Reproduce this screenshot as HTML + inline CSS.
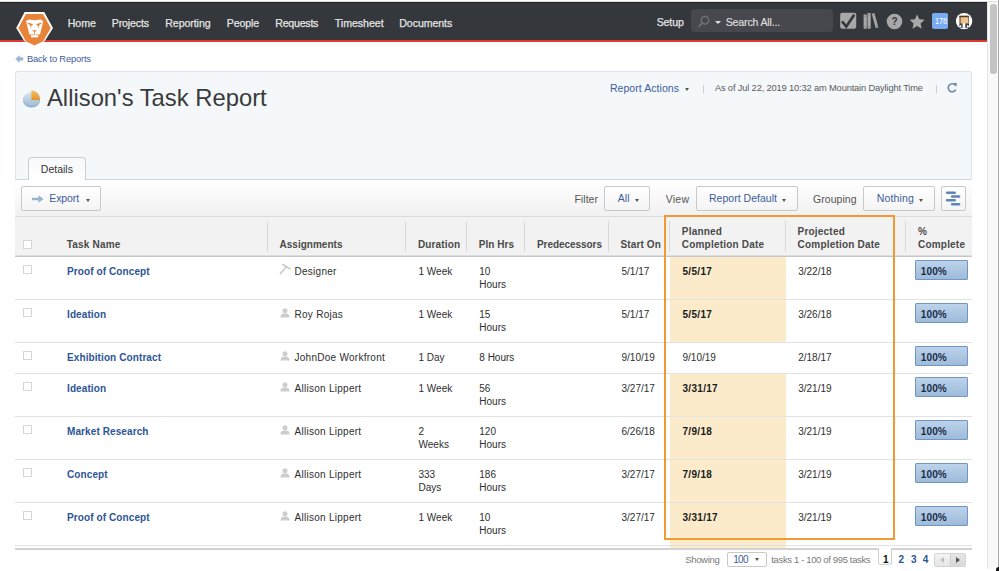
<!DOCTYPE html>
<html><head><meta charset="utf-8">
<style>
*{box-sizing:border-box;margin:0;padding:0}
html,body{width:999px;height:571px;overflow:hidden;background:#fff;font-family:"Liberation Sans",sans-serif;position:relative}
.a{position:absolute}
.t{position:absolute;line-height:1;white-space:nowrap;z-index:2}
.caret{position:absolute;width:0;height:0;border-left:2.8px solid transparent;border-right:2.8px solid transparent;border-top:3px solid #555;margin-left:0.2px;margin-top:0px}
.btn{position:absolute;border:1px solid #c9c9c9;border-radius:2px;background:linear-gradient(#ffffff,#f4f4f4)}
.hsep{position:absolute;top:221px;height:31px;width:1px;background:#d9d9d9}
.rowb{position:absolute;left:15px;width:957px;height:1px;background:#e2e2e2}
.cb{position:absolute;left:23px;width:9px;height:9px;border:1px solid #d6d6d6;background:#fff}
.pct{position:absolute;left:915px;width:53px;height:20px;margin-top:0.2px;border:1px solid #7396bf;border-radius:1px;background:linear-gradient(#bcd3ea,#9ebbdb)}
.hl{position:absolute;left:670px;width:116px;background:#fbebcb}
</style></head><body>
<!-- top strip -->
<div class="a" style="left:0;top:1px;width:997px;height:1px;background:#dedede"></div>
<!-- header -->
<div class="a" style="left:0;top:2px;width:987px;height:38px;background:#34373c;border-top:1px solid #23252a"></div>
<div class="a" style="left:0;top:40px;width:987px;height:2px;background:#e0382b"></div>
<!-- scrollbar -->
<div class="a" style="left:987px;top:2px;width:11px;height:567px;background:#f9f9f9;border-left:1px solid #e6e6e6"></div>
<div class="a" style="left:998px;top:0;width:1px;height:571px;background:#a8a8a8"></div>
<div class="a" style="left:996px;top:567px;width:3px;height:4px;background:#111;border-radius:3px 0 0 0"></div>
<div class="a" style="left:990.2px;top:4px;width:6.4px;height:70px;background:#c3c3c3;border-radius:3.2px"></div>

<!-- logo -->
<svg class="a" style="left:0;top:0;z-index:3" width="60" height="50" viewBox="0 0 60 50">
  <polygon points="24.6,12 44.2,12 53,28 44.8,41 34.5,46.6 24.2,41 16.2,28" fill="#fff"/>
  <polygon points="25.9,14 43,14 50.8,28 43.2,41.2 34.5,45.5 25.8,41.2 18.4,28" fill="#e8843a"/>
  <path d="M26,21 L28.7,19.6 L34.6,20.2 L40.5,19.6 L43.3,21.2 L40,34.5 L29.4,34.5 Z" fill="#fff"/>
  <path d="M31,35.1 L38.2,35.1 L38.2,37.4 L31,37.4 Z" fill="#fff"/>
  <path d="M26.2,22.2 L32.8,23.9 L32.6,25.2 L31.4,25.6 L30.9,28.6 L30.1,25.3 Z" fill="#e8843a"/>
  <path d="M43.0,22.2 L36.4,23.9 L36.6,25.2 L37.8,25.6 L38.3,28.6 L39.1,25.3 Z" fill="#e8843a"/>
  <path d="M32.1,30.3 L36.9,30.3 L34.5,32.2 Z" fill="#e8843a"/>
  <path d="M34.5,32 L34.5,33.8" stroke="#e8843a" stroke-width="0.9"/>
</svg>

<!-- search box -->
<div class="a" style="left:691px;top:9px;width:142px;height:23px;background:#46484d;border-radius:4px"></div>
<svg class="a" style="left:697px;top:15px" width="14" height="13" viewBox="0 0 14 13">
  <circle cx="8" cy="5.2" r="3.8" fill="none" stroke="#6e7075" stroke-width="1.5"/>
  <line x1="5.3" y1="8" x2="2" y2="11.5" stroke="#6e7075" stroke-width="1.8" stroke-linecap="round"/>
</svg>
<div class="caret" style="left:714.5px;top:20.5px;border-left-width:3.2px;border-right-width:3.2px;border-top:3.5px solid #e0e0e0"></div>

<!-- header icons -->
<svg class="a" style="left:840px;top:12px" width="17" height="17" viewBox="0 0 17 17">
  <rect x="0.2" y="0.8" width="16" height="16" rx="2" fill="#a8a8a8"/>
  <path d="M2,9.3 L6.3,14.5 L14.2,2.8" fill="none" stroke="#34373c" stroke-width="2.6" stroke-linejoin="miter"/>
</svg>
<svg class="a" style="left:862px;top:12px" width="18" height="18" viewBox="0 0 18 18">
  <rect x="1.6" y="2.6" width="3.2" height="14.1" rx="0.7" fill="#a8a8a8"/>
  <rect x="5.5" y="0.9" width="3.2" height="15.8" rx="0.7" fill="#a8a8a8"/>
  <path d="M9.7,1.7 L12.4,1.1 L16.4,15.4 L13.7,16.1 Z" fill="#a8a8a8"/>
  <g stroke="#6f7175" stroke-width="0.5">
    <line x1="1.6" y1="4.3" x2="4.8" y2="4.3"/><line x1="1.6" y1="14.8" x2="4.8" y2="14.8"/>
    <line x1="5.5" y1="2.8" x2="8.7" y2="2.8"/><line x1="5.5" y1="14.8" x2="8.7" y2="14.8"/>
    <line x1="10.2" y1="3.3" x2="12.9" y2="2.7"/><line x1="13.3" y1="14.3" x2="16" y2="13.6"/>
  </g>
</svg>
<svg class="a" style="left:886px;top:13px" width="17" height="17" viewBox="0 0 17 17">
  <circle cx="8.5" cy="8.5" r="7.8" fill="#a8a8a8"/>
  <text x="8.5" y="12.2" text-anchor="middle" font-family="Liberation Sans" font-weight="700" font-size="10" fill="#34373c">?</text>
</svg>
<svg class="a" style="left:909px;top:13px" width="17" height="17" viewBox="0 0 17 17">
  <polygon points="8.10,1.40 10.27,6.31 15.61,6.86 11.62,10.44 12.74,15.69 8.10,13.00 3.46,15.69 4.58,10.44 0.59,6.86 5.93,6.31" fill="#a8a8a8"/>
</svg>
<div class="a" style="left:932.4px;top:12.9px;width:16px;height:15.7px;background:#78acf2;border-radius:2px"></div>
<svg class="a" style="left:955px;top:12px" width="18" height="18" viewBox="0 0 18 18">
  <circle cx="9.1" cy="9.1" r="8.2" fill="#fff"/>
  <rect x="4.4" y="3.8" width="9.4" height="8.2" fill="#7a5534"/>
  <rect x="4.4" y="3.8" width="9.4" height="1.6" fill="#553a22"/>
  <rect x="5.7" y="5.3" width="7.3" height="6" fill="#eec58f"/>
  <rect x="4.4" y="11.9" width="9.6" height="3.9" fill="#3b3d42"/>
  <rect x="7.6" y="11.1" width="2.7" height="4.7" fill="#fff"/>
  <polygon points="3.8,14.6 6.2,12.8 6.2,15.8" fill="#fff"/>
  <polygon points="14.4,14.6 12,12.8 12,15.8" fill="#fff"/>
</svg>

<!-- back arrow -->
<svg class="a" style="left:15px;top:54.5px" width="9" height="9" viewBox="0 0 9 9">
  <polygon points="0.6,3.9 4.4,0.7 4.4,2.6 7.9,2.6 7.9,5.2 4.4,5.2 4.4,7.4" fill="#9ab6d1" stroke="#9ab6d1" stroke-width="0.5" stroke-linejoin="round"/>
</svg>

<!-- panel -->
<div class="a" style="left:15px;top:71px;width:957px;height:109px;background:#f4f8fb;border:1px solid #dce5ed;border-bottom:1px solid #cfd6dc;border-radius:3px 3px 0 0"></div>
<!-- pie icon -->
<svg class="a" style="left:22px;top:89px" width="20" height="20" viewBox="0 0 20 20">
  <defs>
    <linearGradient id="pg" x1="0" y1="0" x2="0" y2="1"><stop offset="0" stop-color="#d6e5f1"/><stop offset="1" stop-color="#9dbbd4"/></linearGradient>
    <linearGradient id="og" x1="0" y1="0" x2="0" y2="1"><stop offset="0" stop-color="#f6c165"/><stop offset="1" stop-color="#e6952a"/></linearGradient>
  </defs>
  <ellipse cx="9.5" cy="11.8" rx="8.5" ry="6.8" fill="#86a6c2"/>
  <ellipse cx="9.5" cy="10.4" rx="8.5" ry="7.1" fill="url(#pg)"/>
  <path d="M9.4,10.6 L9.4,1.2 A8.6,9.2 0 0 1 18,10.6 Z" fill="url(#og)"/>
  <path d="M9.4,10.6 L18,10.6" stroke="#d98a22" stroke-width="0.8"/>
</svg>
<!-- report actions caret and separators -->
<div class="caret" style="left:685px;top:88px;border-top-color:#555"></div>
<div class="a" style="left:702.5px;top:84.5px;width:1px;height:8px;background:#cfcfcf"></div>
<div class="a" style="left:935.8px;top:84.5px;width:1px;height:8px;background:#cfcfcf"></div>
<svg class="a" style="left:946px;top:82px" width="12" height="12" viewBox="0 0 12 12">
  <path d="M9.3,3.2 A4,4 0 1 0 9.8,7.6" fill="none" stroke="#6a87a8" stroke-width="1.6"/>
  <polygon points="7,1.6 10.8,0.8 10.4,4.8" fill="#6a87a8"/>
</svg>

<!-- tab -->
<div class="a" style="left:27.7px;top:157.4px;width:58px;height:23px;border:1px solid #c9ced3;border-bottom:none;border-radius:4px 4px 0 0;background:linear-gradient(#f7f9fb,#ffffff);z-index:1"></div>

<!-- toolbar -->
<div class="a" style="left:15px;top:180px;width:957px;height:36px;background:linear-gradient(#ffffff,#f1f1f1)"></div>
<div class="btn" style="left:21px;top:186px;width:80px;height:25px"></div>
<svg class="a" style="left:31px;top:195px" width="13" height="8" viewBox="0 0 13 8">
  <polygon points="12.5,4 7.5,0.3 7.5,2.8 1,2.8 1,5.2 7.5,5.2 7.5,7.7" fill="#9ab3cc"/>
</svg>
<div class="caret" style="left:85.5px;top:198.5px"></div>
<div class="btn" style="left:604px;top:186px;width:46px;height:25px"></div>
<div class="caret" style="left:634.5px;top:198.5px"></div>
<div class="btn" style="left:696px;top:186px;width:102px;height:25px"></div>
<div class="caret" style="left:781.8px;top:198.5px"></div>
<div class="btn" style="left:863px;top:186px;width:72px;height:25px"></div>
<div class="caret" style="left:919px;top:198.5px"></div>
<div class="btn" style="left:941px;top:186px;width:25px;height:25px"></div>
<svg class="a" style="left:944px;top:189px" width="19" height="19" viewBox="0 0 19 19">
  <g fill="#5f84b8">
    <rect x="1.9" y="2.4" width="10" height="2.5" rx="1.2"/>
    <rect x="6.9" y="6.2" width="9.4" height="2.5" rx="1.2"/>
    <rect x="1.9" y="10" width="10" height="2.5" rx="1.2"/>
    <rect x="6.9" y="13.9" width="9.4" height="2.5" rx="1.2"/>
  </g>
</svg>

<!-- table header -->
<div class="a" style="left:15px;top:215.5px;width:957px;height:41.5px;background:#f2f2f2;border-top:1px solid #dcdcdc"></div>
<div class="a" style="left:15px;top:255px;width:957px;height:1px;background:#dedede"></div>
<div class="a" style="left:15px;top:256px;width:957px;height:1px;background:#c6c6c6"></div>
<div class="cb" style="top:240px"></div>
<div class="hsep" style="left:267px"></div>
<div class="hsep" style="left:405px"></div>
<div class="hsep" style="left:466px"></div>
<div class="hsep" style="left:524px"></div>
<div class="hsep" style="left:608px"></div>
<div class="hsep" style="left:669px"></div>
<div class="hsep" style="left:785px"></div>
<div class="hsep" style="left:905px"></div>

<!-- highlight column -->
<div class="hl" style="top:257px;height:85px"></div>
<div class="hl" style="top:373px;height:176px"></div>

<!-- row borders -->
<div class="rowb" style="top:298.5px"></div>
<div class="rowb" style="top:341.5px"></div>
<div class="rowb" style="top:372.5px"></div>
<div class="rowb" style="top:415.5px"></div>
<div class="rowb" style="top:458.5px"></div>
<div class="rowb" style="top:501.5px"></div>
<div class="rowb" style="top:544.5px"></div>
<div class="a" style="left:15px;top:548.3px;width:957px;height:1.4px;background:#d2d2d2"></div>

<!-- checkboxes & icons & pct bars -->
<div class="cb" style="top:265.2px"></div>
<div class="cb" style="top:308.2px"></div>
<div class="cb" style="top:351.2px"></div>
<div class="cb" style="top:382.2px"></div>
<div class="cb" style="top:425.2px"></div>
<div class="cb" style="top:468.2px"></div>
<div class="cb" style="top:511.2px"></div>

<svg class="a" style="left:279px;top:263px" width="13" height="13" viewBox="0 0 13 13">
  <line x1="1.4" y1="10.6" x2="7.4" y2="3.8" stroke="#cbcbcb" stroke-width="1.6" stroke-linecap="round"/>
  <line x1="3.8" y1="1.6" x2="10.8" y2="5.8" stroke="#cbcbcb" stroke-width="1.7" stroke-linecap="round"/>
</svg>
<svg class="a" style="left:280px;top:308px" width="10" height="10" viewBox="0 0 10 10"><circle cx="5" cy="2.7" r="2.5" fill="#cdcdcd"/><path d="M0.3,9.6 Q0.6,6.2 3.5,5.6 L6.5,5.6 Q9.4,6.2 9.7,9.6 Z" fill="#cdcdcd"/></svg>
<svg class="a" style="left:280px;top:351px" width="10" height="10" viewBox="0 0 10 10"><circle cx="5" cy="2.7" r="2.5" fill="#cdcdcd"/><path d="M0.3,9.6 Q0.6,6.2 3.5,5.6 L6.5,5.6 Q9.4,6.2 9.7,9.6 Z" fill="#cdcdcd"/></svg>
<svg class="a" style="left:280px;top:382px" width="10" height="10" viewBox="0 0 10 10"><circle cx="5" cy="2.7" r="2.5" fill="#cdcdcd"/><path d="M0.3,9.6 Q0.6,6.2 3.5,5.6 L6.5,5.6 Q9.4,6.2 9.7,9.6 Z" fill="#cdcdcd"/></svg>
<svg class="a" style="left:280px;top:425px" width="10" height="10" viewBox="0 0 10 10"><circle cx="5" cy="2.7" r="2.5" fill="#cdcdcd"/><path d="M0.3,9.6 Q0.6,6.2 3.5,5.6 L6.5,5.6 Q9.4,6.2 9.7,9.6 Z" fill="#cdcdcd"/></svg>
<svg class="a" style="left:280px;top:468px" width="10" height="10" viewBox="0 0 10 10"><circle cx="5" cy="2.7" r="2.5" fill="#cdcdcd"/><path d="M0.3,9.6 Q0.6,6.2 3.5,5.6 L6.5,5.6 Q9.4,6.2 9.7,9.6 Z" fill="#cdcdcd"/></svg>
<svg class="a" style="left:280px;top:511px" width="10" height="10" viewBox="0 0 10 10"><circle cx="5" cy="2.7" r="2.5" fill="#cdcdcd"/><path d="M0.3,9.6 Q0.6,6.2 3.5,5.6 L6.5,5.6 Q9.4,6.2 9.7,9.6 Z" fill="#cdcdcd"/></svg>


<div class="pct" style="top:260.3px"></div>
<div class="pct" style="top:303.3px"></div>
<div class="pct" style="top:346.3px"></div>
<div class="pct" style="top:377.3px"></div>
<div class="pct" style="top:420.3px"></div>
<div class="pct" style="top:463.3px"></div>
<div class="pct" style="top:506.3px"></div>

<!-- orange box -->
<div class="a" style="left:664px;top:214.8px;width:230.5px;height:325.3px;border:2px solid #f19a35;z-index:4"></div>

<!-- footer -->
<div class="btn" style="left:727px;top:552px;width:40px;height:15px;background:#fff"></div>
<div class="caret" style="left:754.5px;top:558px"></div>
<div class="a" style="left:878.2px;top:548.3px;width:14.3px;height:16.7px;border:1px solid #d0d0d0;border-top:none;border-radius:0 0 3px 3px;background:#fff;z-index:1"></div>
<div class="a" style="left:934.3px;top:553px;width:31.5px;height:13.7px;border:1px solid #d4d4d4;border-radius:2px;background:linear-gradient(#f4f4f4,#e6e6e6)"></div>
<div class="a" style="left:949.6px;top:553px;width:1px;height:13.7px;background:#d0d0d0"></div>
<div class="a" style="left:950.6px;top:554px;width:14.2px;height:11.7px;background:linear-gradient(#e6e6e6,#d8d8d8)"></div>
<div class="a" style="left:939.5px;top:556.5px;width:0;height:0;border-top:3.5px solid transparent;border-bottom:3.5px solid transparent;border-right:4px solid #c0c0c0"></div>
<div class="a" style="left:955.5px;top:556.5px;width:0;height:0;border-top:3.5px solid transparent;border-bottom:3.5px solid transparent;border-left:4px solid #555"></div>

<div class="t" id="t0" style="left:67.80px;top:17.53px;font-size:10.6px;color:#e4e4e4;font-weight:400;letter-spacing:-0.090px;-webkit-text-stroke:0.25px #e4e4e4;">Home</div>
<div class="t" id="t1" style="left:111.80px;top:17.53px;font-size:10.6px;color:#e4e4e4;font-weight:400;letter-spacing:-0.154px;-webkit-text-stroke:0.25px #e4e4e4;">Projects</div>
<div class="t" id="t2" style="left:165.30px;top:17.53px;font-size:10.6px;color:#e4e4e4;font-weight:400;letter-spacing:-0.080px;-webkit-text-stroke:0.25px #e4e4e4;">Reporting</div>
<div class="t" id="t3" style="left:226.80px;top:17.53px;font-size:10.6px;color:#e4e4e4;font-weight:400;letter-spacing:-0.138px;-webkit-text-stroke:0.25px #e4e4e4;">People</div>
<div class="t" id="t4" style="left:275.30px;top:17.53px;font-size:10.6px;color:#e4e4e4;font-weight:400;letter-spacing:-0.238px;-webkit-text-stroke:0.25px #e4e4e4;">Requests</div>
<div class="t" id="t5" style="left:334.80px;top:17.53px;font-size:10.6px;color:#e4e4e4;font-weight:400;letter-spacing:-0.033px;-webkit-text-stroke:0.25px #e4e4e4;">Timesheet</div>
<div class="t" id="t6" style="left:399.30px;top:17.53px;font-size:10.6px;color:#e4e4e4;font-weight:400;letter-spacing:-0.073px;-webkit-text-stroke:0.25px #e4e4e4;">Documents</div>
<div class="t" id="t7" style="left:656.70px;top:17.23px;font-size:10.6px;color:#e4e4e4;font-weight:400;letter-spacing:-0.147px;-webkit-text-stroke:0.25px #e4e4e4;">Setup</div>
<div class="t" id="t8" style="left:725.70px;top:17.23px;font-size:10.6px;color:#dcdcdc;font-weight:400;letter-spacing:-0.170px;-webkit-text-stroke:0.2px #dcdcdc;">Search All...</div>
<div class="t" id="t9" style="left:934.60px;top:17.02px;font-size:8.6px;color:#ffffff;font-weight:400;letter-spacing:-1.470px;letter-spacing:-0.2px;transform:scaleX(0.86);transform-origin:0 0;">178</div>
<div class="t" id="t10" style="left:27.00px;top:54.44px;font-size:9.4px;color:#3f5d9c;font-weight:400;letter-spacing:-0.193px;">Back to Reports</div>
<div class="t" id="t11" style="left:47.00px;top:85.85px;font-size:23.8px;color:#3a3a3a;font-weight:400;letter-spacing:-0.000px;">Allison's Task Report</div>
<div class="t" id="t12" style="left:609.90px;top:83.41px;font-size:10.5px;color:#3d5c9b;font-weight:400;letter-spacing:0.062px;">Report Actions</div>
<div class="t" id="t13" style="left:714.90px;top:84.13px;font-size:9.3px;color:#5a5a5a;font-weight:400;letter-spacing:-0.151px;">As of Jul 22, 2019 10:32 am Mountain Daylight Time</div>
<div class="t" id="t14" style="left:40.80px;top:163.81px;font-size:10.5px;color:#333333;font-weight:400;letter-spacing:-0.000px;">Details</div>
<div class="t" id="t15" style="left:49.30px;top:192.91px;font-size:10.5px;color:#3d5c9b;font-weight:400;letter-spacing:-0.090px;">Export</div>
<div class="t" id="t16" style="left:574.40px;top:193.71px;font-size:10.5px;color:#555555;font-weight:400;letter-spacing:0.052px;">Filter</div>
<div class="t" id="t17" style="left:617.70px;top:193.41px;font-size:10.5px;color:#3d5c9b;font-weight:400;letter-spacing:0.165px;">All</div>
<div class="t" id="t18" style="left:665.70px;top:193.71px;font-size:10.5px;color:#555555;font-weight:400;letter-spacing:0.242px;">View</div>
<div class="t" id="t19" style="left:709.00px;top:193.41px;font-size:10.5px;color:#3d5c9b;font-weight:400;letter-spacing:0.022px;">Report Default</div>
<div class="t" id="t20" style="left:813.00px;top:193.71px;font-size:10.5px;color:#555555;font-weight:400;letter-spacing:0.044px;">Grouping</div>
<div class="t" id="t21" style="left:876.80px;top:193.41px;font-size:10.5px;color:#3d5c9b;font-weight:400;letter-spacing:0.134px;">Nothing</div>
<div class="t" id="t22" style="left:66.70px;top:240.23px;font-size:10px;color:#4a4a4a;font-weight:700;letter-spacing:0.000px;letter-spacing:0.2px;">Task Name</div>
<div class="t" id="t23" style="left:279.50px;top:240.23px;font-size:10px;color:#4a4a4a;font-weight:700;letter-spacing:0.020px;">Assignments</div>
<div class="t" id="t24" style="left:418.00px;top:240.23px;font-size:10px;color:#4a4a4a;font-weight:700;letter-spacing:0.127px;">Duration</div>
<div class="t" id="t25" style="left:478.70px;top:240.23px;font-size:10px;color:#4a4a4a;font-weight:700;letter-spacing:0.046px;">Pln Hrs</div>
<div class="t" id="t26" style="left:537.00px;top:240.23px;font-size:10px;color:#4a4a4a;font-weight:700;letter-spacing:-0.056px;">Predecessors</div>
<div class="t" id="t27" style="left:620.50px;top:240.23px;font-size:10px;color:#4a4a4a;font-weight:700;letter-spacing:0.121px;">Start On</div>
<div class="t" id="t28" style="left:681.80px;top:227.23px;font-size:10px;color:#4a4a4a;font-weight:700;letter-spacing:0.000px;letter-spacing:0.2px;">Planned</div>
<div class="t" id="t29" style="left:681.80px;top:240.23px;font-size:10px;color:#4a4a4a;font-weight:700;letter-spacing:0.000px;letter-spacing:0.2px;">Completion Date</div>
<div class="t" id="t30" style="left:797.60px;top:227.23px;font-size:10px;color:#4a4a4a;font-weight:700;letter-spacing:0.000px;letter-spacing:0.2px;">Projected</div>
<div class="t" id="t31" style="left:797.60px;top:240.23px;font-size:10px;color:#4a4a4a;font-weight:700;letter-spacing:0.000px;letter-spacing:0.2px;">Completion Date</div>
<div class="t" id="t32" style="left:918.00px;top:227.23px;font-size:10px;color:#4a4a4a;font-weight:700;letter-spacing:0.000px;">%</div>
<div class="t" id="t33" style="left:918.00px;top:240.23px;font-size:10px;color:#4a4a4a;font-weight:700;letter-spacing:0.000px;letter-spacing:0.2px;">Complete</div>
<div class="t" id="t34" style="left:67.00px;top:266.54px;font-size:10px;color:#2c5597;font-weight:700;letter-spacing:0.000px;letter-spacing:0.1px;">Proof of Concept</div>
<div class="t" id="t35" style="left:294.50px;top:266.54px;font-size:10px;color:#2e2e2e;font-weight:400;letter-spacing:0.000px;letter-spacing:0.27px;">Designer</div>
<div class="t" id="t36" style="left:418.50px;top:266.54px;font-size:10px;color:#2e2e2e;font-weight:400;letter-spacing:0.000px;">1 Week</div>
<div class="t" id="t37" style="left:479.30px;top:266.54px;font-size:10px;color:#2e2e2e;font-weight:400;letter-spacing:0.000px;">10</div>
<div class="t" id="t38" style="left:479.30px;top:279.54px;font-size:10px;color:#2e2e2e;font-weight:400;letter-spacing:0.000px;">Hours</div>
<div class="t" id="t39" style="left:621.50px;top:266.54px;font-size:10px;color:#2e2e2e;font-weight:400;letter-spacing:0.000px;">5/1/17</div>
<div class="t" id="t40" style="left:682.50px;top:266.54px;font-size:10px;color:#1a1a1a;font-weight:700;letter-spacing:0.000px;letter-spacing:0.3px">5/5/17</div>
<div class="t" id="t41" style="left:798.20px;top:266.54px;font-size:10px;color:#2e2e2e;font-weight:400;letter-spacing:0.000px;">3/22/18</div>
<div class="t" id="t42" style="left:920.80px;top:267.04px;font-size:10px;color:#1c2d48;font-weight:700;letter-spacing:0.105px;z-index:3;">100%</div>
<div class="t" id="t43" style="left:67.00px;top:309.54px;font-size:10px;color:#2c5597;font-weight:700;letter-spacing:0.000px;letter-spacing:0.1px;">Ideation</div>
<div class="t" id="t44" style="left:294.50px;top:309.54px;font-size:10px;color:#2e2e2e;font-weight:400;letter-spacing:0.000px;letter-spacing:0.27px;">Roy Rojas</div>
<div class="t" id="t45" style="left:418.50px;top:309.54px;font-size:10px;color:#2e2e2e;font-weight:400;letter-spacing:0.000px;">1 Week</div>
<div class="t" id="t46" style="left:479.30px;top:309.54px;font-size:10px;color:#2e2e2e;font-weight:400;letter-spacing:0.000px;">15</div>
<div class="t" id="t47" style="left:479.30px;top:322.54px;font-size:10px;color:#2e2e2e;font-weight:400;letter-spacing:0.000px;">Hours</div>
<div class="t" id="t48" style="left:621.50px;top:309.54px;font-size:10px;color:#2e2e2e;font-weight:400;letter-spacing:0.000px;">5/1/17</div>
<div class="t" id="t49" style="left:682.50px;top:309.54px;font-size:10px;color:#1a1a1a;font-weight:700;letter-spacing:0.000px;letter-spacing:0.3px">5/5/17</div>
<div class="t" id="t50" style="left:798.20px;top:309.54px;font-size:10px;color:#2e2e2e;font-weight:400;letter-spacing:0.000px;">3/26/18</div>
<div class="t" id="t51" style="left:920.80px;top:310.04px;font-size:10px;color:#1c2d48;font-weight:700;letter-spacing:0.105px;z-index:3;">100%</div>
<div class="t" id="t52" style="left:67.00px;top:352.54px;font-size:10px;color:#2c5597;font-weight:700;letter-spacing:0.000px;letter-spacing:0.1px;">Exhibition Contract</div>
<div class="t" id="t53" style="left:294.50px;top:352.54px;font-size:10px;color:#2e2e2e;font-weight:400;letter-spacing:0.000px;letter-spacing:0.27px;">JohnDoe Workfront</div>
<div class="t" id="t54" style="left:418.50px;top:352.54px;font-size:10px;color:#2e2e2e;font-weight:400;letter-spacing:0.000px;">1 Day</div>
<div class="t" id="t55" style="left:479.30px;top:352.54px;font-size:10px;color:#2e2e2e;font-weight:400;letter-spacing:0.000px;">8 Hours</div>
<div class="t" id="t56" style="left:621.50px;top:352.54px;font-size:10px;color:#2e2e2e;font-weight:400;letter-spacing:0.000px;">9/10/19</div>
<div class="t" id="t57" style="left:682.50px;top:352.54px;font-size:10px;color:#2e2e2e;font-weight:400;letter-spacing:0.000px;">9/10/19</div>
<div class="t" id="t58" style="left:798.20px;top:352.54px;font-size:10px;color:#2e2e2e;font-weight:400;letter-spacing:0.000px;">2/18/17</div>
<div class="t" id="t59" style="left:920.80px;top:353.04px;font-size:10px;color:#1c2d48;font-weight:700;letter-spacing:0.105px;z-index:3;">100%</div>
<div class="t" id="t60" style="left:67.00px;top:383.54px;font-size:10px;color:#2c5597;font-weight:700;letter-spacing:0.000px;letter-spacing:0.1px;">Ideation</div>
<div class="t" id="t61" style="left:294.50px;top:383.54px;font-size:10px;color:#2e2e2e;font-weight:400;letter-spacing:0.000px;letter-spacing:0.27px;">Allison Lippert</div>
<div class="t" id="t62" style="left:418.50px;top:383.54px;font-size:10px;color:#2e2e2e;font-weight:400;letter-spacing:0.000px;">1 Week</div>
<div class="t" id="t63" style="left:479.30px;top:383.54px;font-size:10px;color:#2e2e2e;font-weight:400;letter-spacing:0.000px;">56</div>
<div class="t" id="t64" style="left:479.30px;top:396.54px;font-size:10px;color:#2e2e2e;font-weight:400;letter-spacing:0.000px;">Hours</div>
<div class="t" id="t65" style="left:621.50px;top:383.54px;font-size:10px;color:#2e2e2e;font-weight:400;letter-spacing:0.000px;">3/27/17</div>
<div class="t" id="t66" style="left:682.50px;top:383.54px;font-size:10px;color:#1a1a1a;font-weight:700;letter-spacing:0.000px;letter-spacing:0.3px">3/31/17</div>
<div class="t" id="t67" style="left:798.20px;top:383.54px;font-size:10px;color:#2e2e2e;font-weight:400;letter-spacing:0.000px;">3/21/19</div>
<div class="t" id="t68" style="left:920.80px;top:384.04px;font-size:10px;color:#1c2d48;font-weight:700;letter-spacing:0.105px;z-index:3;">100%</div>
<div class="t" id="t69" style="left:67.00px;top:426.54px;font-size:10px;color:#2c5597;font-weight:700;letter-spacing:0.000px;letter-spacing:0.1px;">Market Research</div>
<div class="t" id="t70" style="left:294.50px;top:426.54px;font-size:10px;color:#2e2e2e;font-weight:400;letter-spacing:0.000px;letter-spacing:0.27px;">Allison Lippert</div>
<div class="t" id="t71" style="left:418.50px;top:426.54px;font-size:10px;color:#2e2e2e;font-weight:400;letter-spacing:0.000px;">2</div>
<div class="t" id="t72" style="left:418.50px;top:439.54px;font-size:10px;color:#2e2e2e;font-weight:400;letter-spacing:0.000px;">Weeks</div>
<div class="t" id="t73" style="left:479.30px;top:426.54px;font-size:10px;color:#2e2e2e;font-weight:400;letter-spacing:0.000px;">120</div>
<div class="t" id="t74" style="left:479.30px;top:439.54px;font-size:10px;color:#2e2e2e;font-weight:400;letter-spacing:0.000px;">Hours</div>
<div class="t" id="t75" style="left:621.50px;top:426.54px;font-size:10px;color:#2e2e2e;font-weight:400;letter-spacing:0.000px;">6/26/18</div>
<div class="t" id="t76" style="left:682.50px;top:426.54px;font-size:10px;color:#1a1a1a;font-weight:700;letter-spacing:0.000px;letter-spacing:0.3px">7/9/18</div>
<div class="t" id="t77" style="left:798.20px;top:426.54px;font-size:10px;color:#2e2e2e;font-weight:400;letter-spacing:0.000px;">3/21/19</div>
<div class="t" id="t78" style="left:920.80px;top:427.04px;font-size:10px;color:#1c2d48;font-weight:700;letter-spacing:0.105px;z-index:3;">100%</div>
<div class="t" id="t79" style="left:67.00px;top:469.54px;font-size:10px;color:#2c5597;font-weight:700;letter-spacing:0.000px;letter-spacing:0.1px;">Concept</div>
<div class="t" id="t80" style="left:294.50px;top:469.54px;font-size:10px;color:#2e2e2e;font-weight:400;letter-spacing:0.000px;letter-spacing:0.27px;">Allison Lippert</div>
<div class="t" id="t81" style="left:418.50px;top:469.54px;font-size:10px;color:#2e2e2e;font-weight:400;letter-spacing:0.000px;">333</div>
<div class="t" id="t82" style="left:418.50px;top:482.54px;font-size:10px;color:#2e2e2e;font-weight:400;letter-spacing:0.000px;">Days</div>
<div class="t" id="t83" style="left:479.30px;top:469.54px;font-size:10px;color:#2e2e2e;font-weight:400;letter-spacing:0.000px;">186</div>
<div class="t" id="t84" style="left:479.30px;top:482.54px;font-size:10px;color:#2e2e2e;font-weight:400;letter-spacing:0.000px;">Hours</div>
<div class="t" id="t85" style="left:621.50px;top:469.54px;font-size:10px;color:#2e2e2e;font-weight:400;letter-spacing:0.000px;">3/27/17</div>
<div class="t" id="t86" style="left:682.50px;top:469.54px;font-size:10px;color:#1a1a1a;font-weight:700;letter-spacing:0.000px;letter-spacing:0.3px">7/9/18</div>
<div class="t" id="t87" style="left:798.20px;top:469.54px;font-size:10px;color:#2e2e2e;font-weight:400;letter-spacing:0.000px;">3/21/19</div>
<div class="t" id="t88" style="left:920.80px;top:470.04px;font-size:10px;color:#1c2d48;font-weight:700;letter-spacing:0.105px;z-index:3;">100%</div>
<div class="t" id="t89" style="left:67.00px;top:512.53px;font-size:10px;color:#2c5597;font-weight:700;letter-spacing:0.000px;letter-spacing:0.1px;">Proof of Concept</div>
<div class="t" id="t90" style="left:294.50px;top:512.53px;font-size:10px;color:#2e2e2e;font-weight:400;letter-spacing:0.000px;letter-spacing:0.27px;">Allison Lippert</div>
<div class="t" id="t91" style="left:418.50px;top:512.53px;font-size:10px;color:#2e2e2e;font-weight:400;letter-spacing:0.000px;">1 Week</div>
<div class="t" id="t92" style="left:479.30px;top:512.53px;font-size:10px;color:#2e2e2e;font-weight:400;letter-spacing:0.000px;">10</div>
<div class="t" id="t93" style="left:479.30px;top:525.53px;font-size:10px;color:#2e2e2e;font-weight:400;letter-spacing:0.000px;">Hours</div>
<div class="t" id="t94" style="left:621.50px;top:512.53px;font-size:10px;color:#2e2e2e;font-weight:400;letter-spacing:0.000px;">3/27/17</div>
<div class="t" id="t95" style="left:682.50px;top:512.53px;font-size:10px;color:#1a1a1a;font-weight:700;letter-spacing:0.000px;letter-spacing:0.3px">3/31/17</div>
<div class="t" id="t96" style="left:798.20px;top:512.53px;font-size:10px;color:#2e2e2e;font-weight:400;letter-spacing:0.000px;">3/21/19</div>
<div class="t" id="t97" style="left:920.80px;top:513.03px;font-size:10px;color:#1c2d48;font-weight:700;letter-spacing:0.105px;z-index:3;">100%</div>
<div class="t" id="t98" style="left:685.20px;top:554.76px;font-size:9.5px;color:#7a7a7a;font-weight:400;letter-spacing:-0.326px;">Showing</div>
<div class="t" id="t99" style="left:733.30px;top:554.93px;font-size:10px;color:#3d5c9b;font-weight:400;letter-spacing:-0.743px;">100</div>
<div class="t" id="t100" style="left:771.30px;top:554.76px;font-size:9.5px;color:#7a7a7a;font-weight:400;letter-spacing:-0.358px;">tasks 1 - 100 of 995 tasks</div>
<div class="t" id="t101" style="left:883.00px;top:554.53px;font-size:10px;color:#111;font-weight:700;letter-spacing:0.000px;">1</div>
<div class="t" id="t102" style="left:898.60px;top:554.53px;font-size:10px;color:#2c5597;font-weight:700;letter-spacing:0.000px;">2</div>
<div class="t" id="t103" style="left:910.90px;top:554.53px;font-size:10px;color:#2c5597;font-weight:700;letter-spacing:0.000px;">3</div>
<div class="t" id="t104" style="left:922.80px;top:554.53px;font-size:10px;color:#2c5597;font-weight:700;letter-spacing:0.000px;">4</div>
</body></html>
